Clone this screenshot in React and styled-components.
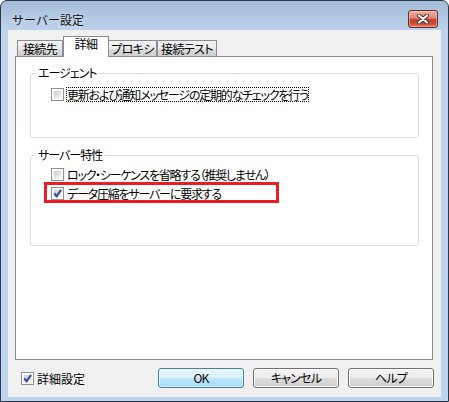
import React from 'react';
import styled, { createGlobalStyle } from 'styled-components';

const GlobalStyle = createGlobalStyle`
  *, *::before, *::after {
    box-sizing: border-box;
  }
  html, body {
    margin: 0;
    padding: 0;
    background: #fff;
  }
  body {
    font-family: "Noto Sans CJK JP", "Noto Sans", sans-serif;
    font-size: 12px;
    color: #000;
  }
`;

const Window = styled.div`
  width: 449px;
  height: 402px;
  display: flex;
  flex-direction: column;
  padding: 0 7px 4px;
  border: 1px solid #2c3847;
  border-radius: 7px 7px 0 0;
  background: linear-gradient(180deg, #a3bcd9 0px, #b4cae4 18px, #bed4ec 30px, #bcd4ec 100%);
`;

const TitleBar = styled.div`
  height: 29px;
  flex: none;
  display: flex;
  align-items: flex-start;
  padding: 8px 3px 0 4px;
`;

const Title = styled.div`
  flex: 1;
  margin-top: 1px;
  font-size: 12px;
  line-height: 20px;
  color: #111;
  text-shadow: 0 0 6px rgba(255, 255, 255, 0.8);
`;

const CloseButton = styled.div`
  width: 30px;
  height: 18px;
  margin-top: 1px;
  display: flex;
  align-items: center;
  justify-content: center;
  border: 1px solid #6b2a22;
  border-radius: 3px;
  background: linear-gradient(180deg, #eab0a2 0%, #dd8877 45%, #c4432f 52%, #c64834 75%, #dc7a63 100%);
  box-shadow: inset 0 0 0 1px rgba(255, 220, 210, 0.45);
`;

const Client = styled.div`
  flex: 1;
  display: flex;
  flex-direction: column;
  padding: 6px 8px 0 7px;
  background: #f0f0f0;
`;

const TabRow = styled.div`
  height: 20px;
  flex: none;
  display: flex;
  align-items: flex-end;
  padding-left: 2px;
  position: relative;
  z-index: 1;
`;

const Tab = styled.div`
  width: ${p => p.$w}px;
  height: ${p => (p.$active ? 21 : 16)}px;
  margin-bottom: ${p => (p.$active ? -1 : 0)}px;
  margin-left: ${p => p.$ml || 0}px;
  border: 1px solid #898c95;
  border-bottom: none;
  background: ${p => (p.$active
    ? '#fff'
    : 'linear-gradient(180deg, #f2f2f2 0%, #ebebeb 50%, #dddddd 50%, #cfcfcf 100%)')};
  text-align: center;
  font-size: 12px;
  line-height: 14px;
  padding-top: ${p => (p.$active ? 0 : 1)}px;
  font-feature-settings: "palt";
  letter-spacing: -0.6px;
  white-space: nowrap;
`;

const Panel = styled.div`
  height: 304px;
  flex: none;
  display: flex;
  flex-direction: column;
  gap: 9px;
  padding: 8px 13px 0 14px;
  border: 1px solid #898c95;
  background: #fff;
`;

const Group = styled.fieldset`
  height: ${p => p.$h}px;
  min-width: 0;
  margin: 0;
  padding: 0;
  border: 1px solid #d5dfe5;
  border-radius: 3px;
`;

const Legend = styled.legend`
  margin-left: 5px;
  padding: 0 2px;
  font-size: 12px;
  line-height: 16px;
  font-feature-settings: "palt";
  letter-spacing: -1px;
`;

const Rows = styled.div`
  display: flex;
  flex-direction: column;
  gap: 4px;
  padding: ${p => p.$pt}px 0 0 20px;
`;

const Row = styled.label`
  position: relative;
  height: 15px;
  display: flex;
  align-items: center;
  gap: 2px;
  font-size: 12px;
  line-height: 15px;
  font-feature-settings: "palt";
  letter-spacing: -1.2px;
  white-space: nowrap;

  ${p => p.$highlight && `
    &::after {
      content: '';
      position: absolute;
      left: -7px;
      top: -4px;
      width: 235px;
      height: 21px;
      border: 3px solid #ed1c24;
    }
  `}
`;

const Box = styled.span`
  position: relative;
  width: 13px;
  height: 13px;
  flex: none;
  border: 1px solid #8e8f8f;
  background: #fff;

  &::before {
    content: '';
    position: absolute;
    inset: 1px;
    background: linear-gradient(135deg, #c9ccd2 0%, #e3e5e8 55%, #f6f6f6 100%);
    border: 1px solid #f4f4f4;
  }

  svg {
    position: absolute;
    left: -1px;
    top: -1px;
  }
`;

const Caption = styled.span`
  padding: 0 1px;
  outline: ${p => (p.$focus ? '1px dotted #000' : 'none')};
  outline-offset: -1px;
`;

const BottomRow = styled.div`
  height: 20px;
  flex: none;
  margin-top: 8px;
  display: flex;
  align-items: center;
`;

const BottomCheck = styled(Row)`
  margin-left: 6px;
  letter-spacing: 0;
`;

const ButtonGroup = styled.div`
  margin-left: auto;
  margin-right: -1px;
  display: flex;
  gap: 9px;
`;

const Button = styled.button`
  width: 86px;
  height: 20px;
  padding: 0;
  border: 1px solid ${p => (p.$default ? '#3c7fb1' : '#707070')};
  border-radius: 3px;
  background: ${p => (p.$default
    ? 'linear-gradient(180deg, #eaf6fd 0%, #d9f0fc 50%, #bee6fd 50%, #a7d9f5 100%)'
    : 'linear-gradient(180deg, #f2f2f2 0%, #ebebeb 50%, #dddddd 50%, #cfcfcf 100%)')};
  box-shadow: inset 0 0 0 1px ${p => (p.$default ? 'rgba(255,255,255,0.6)' : '#fcfcfc')};
  font-family: "Noto Sans CJK JP", "Noto Sans", sans-serif;
  font-size: 12px;
  line-height: 16px;
  color: #000;
  font-feature-settings: "palt";
  letter-spacing: -0.8px;
`;

function Check({ checked }) {
  return (
    <Box>
      {checked && (
        <svg width="13" height="13" viewBox="0 0 13 13">
          <path d="M3.4 6.4 L5.6 9.2 L10 3" fill="none" stroke="#a9b6d6" strokeWidth="3" strokeLinejoin="round" />
          <path d="M3.4 6.4 L5.6 9.2 L10 3" fill="none" stroke="#2d4690" strokeWidth="1.7" />
        </svg>
      )}
    </Box>
  );
}

export default function App() {
  return (
    <>
      <GlobalStyle />
      <Window>
        <TitleBar>
          <Title>サーバー設定</Title>
          <CloseButton>
            <svg width="14" height="10" viewBox="0 0 14 10">
              <path d="M3 1.5 L11 8.5 M11 1.5 L3 8.5" stroke="#4a2a26" strokeWidth="4" strokeLinecap="round" />
              <path d="M3 1.5 L11 8.5 M11 1.5 L3 8.5" stroke="#fff" strokeWidth="2.2" strokeLinecap="round" />
            </svg>
          </CloseButton>
        </TitleBar>
        <Client>
          <TabRow>
            <Tab $w={46}>接続先</Tab>
            <Tab $w={46} $active>詳細</Tab>
            <Tab $w={49} $ml={-1}>プロキシ</Tab>
            <Tab $w={60}>接続テスト</Tab>
          </TabRow>
          <Panel>
            <Group $h={73}>
              <Legend>エージェント</Legend>
              <Rows $pt={6}>
                <Row>
                  <Check />
                  <Caption $focus>更新および通知メッセージの定期的なチェックを行う</Caption>
                </Row>
              </Rows>
            </Group>
            <Group $h={99}>
              <Legend>サーバー特性</Legend>
              <Rows $pt={4}>
                <Row>
                  <Check />
                  <Caption>ロック・シーケンスを省略する（推奨しません）</Caption>
                </Row>
                <Row $highlight>
                  <Check checked />
                  <Caption>データ圧縮をサーバーに要求する</Caption>
                </Row>
              </Rows>
            </Group>
          </Panel>
          <BottomRow>
            <BottomCheck>
              <Check checked />
              <Caption>詳細設定</Caption>
            </BottomCheck>
            <ButtonGroup>
              <Button $default>OK</Button>
              <Button>キャンセル</Button>
              <Button>ヘルプ</Button>
            </ButtonGroup>
          </BottomRow>
        </Client>
      </Window>
    </>
  );
}
